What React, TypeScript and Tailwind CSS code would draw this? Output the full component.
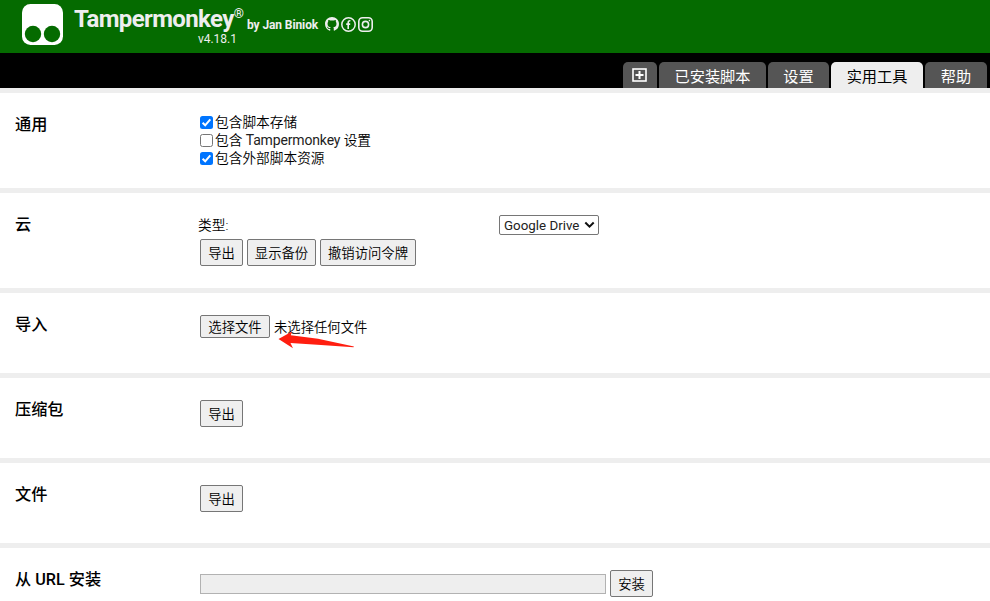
import React from "react";

const font = "font-['Roboto','Noto_Sans_CJK_SC',sans-serif]";

function Button({ children, className = "" }: { children: React.ReactNode; className?: string }) {
  return (
    <button
      className={`flex h-[27px] shrink-0 items-center justify-center whitespace-nowrap rounded-[2px] border border-[#767676] bg-[#efefef] pt-[2px] text-[13.33px] font-[350] leading-none text-black ${className}`}
    >
      {children}
    </button>
  );
}

function Section({ title, height, children }: { title: string; height: string; children: React.ReactNode }) {
  return (
    <section className={`flex shrink-0 border-b-[5px] border-[#eeeeee] bg-white pl-[15px] ${height}`}>
      <h2 className="w-[185px] shrink-0 pt-[21px] text-[16.2px] font-medium leading-[22px]">{title}</h2>
      <div className="min-w-0 flex-1">{children}</div>
    </section>
  );
}

function Check({ label, checked }: { label: React.ReactNode; checked: boolean }) {
  return (
    <label className="flex h-[18px] items-center">
      <span
        className={`mr-[2px] mt-px flex size-[13px] shrink-0 items-center justify-center rounded-[2.5px] ${
          checked ? "bg-[#0075ff]" : "border border-[#767676] bg-white"
        }`}
      >
        {checked && (
          <svg viewBox="0 0 13 13" className="size-[13px]" fill="none" stroke="#fff" strokeWidth="2">
            <path d="M2.6 6.8 5.2 9.3 10.3 3.3" />
          </svg>
        )}
      </span>
      <span className="whitespace-nowrap text-[13.7px] font-[350] leading-[18px]">{label}</span>
    </label>
  );
}

function Tab({ children, className = "", active = false }: { children: React.ReactNode; className?: string; active?: boolean }) {
  return (
    <div
      className={`flex h-[26px] shrink-0 items-center justify-center rounded-t-[5px] pt-[5px] text-[15.2px] leading-none ${
        active ? "bg-[#eeeeee] text-black" : "bg-[#555555] text-white"
      } ${className}`}
    >
      {children}
    </div>
  );
}

export default function App() {
  return (
    <div className={`flex h-[601px] w-[990px] flex-col overflow-hidden bg-white text-black ${font}`}>
      <header className="flex h-[53px] shrink-0 bg-[#056b00] pl-[22px] text-[#eeeeee]">
        <svg viewBox="0 0 41 41" className="mt-[4px] size-[41px] shrink-0">
          <rect width="41" height="41" rx="8.5" fill="#fff" />
          <circle cx="11" cy="30" r="8.2" fill="#056b00" />
          <circle cx="30" cy="30" r="8.2" fill="#056b00" />
        </svg>
        <div className="ml-[11px] w-[170px] shrink-0">
          <div className="flex h-[32px] pt-[5px] leading-[28px]">
            <span className="text-[24px] font-bold tracking-[-0.63px]">Tampermonkey</span>
            <span className="text-[13px] font-bold leading-[17px]">®</span>
          </div>
          <div className="pr-[7px] text-right text-[12px] leading-[14px]">v4.18.1</div>
        </div>
        <div className="ml-[3px] w-[73px] whitespace-nowrap pt-[17px] text-[12px] font-bold leading-[16px] tracking-[-0.1px]">by Jan Biniok</div>
        <div className="ml-[5px] flex gap-[2px] pt-[17px]">
          <svg viewBox="0 0 16 16" className="size-[14px]" fill="#eeeeee">
            <path d="M8 0C3.58 0 0 3.58 0 8c0 3.54 2.29 6.53 5.47 7.59.4.07.55-.17.55-.38 0-.19-.01-.82-.01-1.49-2.01.37-2.53-.49-2.69-.94-.09-.23-.48-.94-.82-1.13-.28-.15-.68-.52-.01-.53.63-.01 1.08.58 1.23.82.72 1.21 1.87.87 2.33.66.07-.52.28-.87.51-1.07-1.78-.2-3.64-.89-3.64-3.95 0-.87.31-1.59.82-2.15-.08-.2-.36-1.02.08-2.12 0 0 .67-.21 2.2.82.64-.18 1.32-.27 2-.27s1.36.09 2 .27c1.53-1.04 2.2-.82 2.2-.82.44 1.1.16 1.92.08 2.12.51.56.82 1.27.82 2.15 0 3.07-1.87 3.75-3.65 3.95.29.25.54.73.54 1.48 0 1.07-.01 1.93-.01 2.2 0 .21.15.46.55.38A8.01 8.01 0 0 0 16 8c0-4.42-3.58-8-8-8z" />
          </svg>
          <svg viewBox="0 0 15 15" className="size-[15px]" fill="none" stroke="#eeeeee" strokeWidth="1.5">
            <circle cx="7.5" cy="7.5" r="6.7" />
            <path d="M7.2 12V5.4c0-1.3.7-1.8 2.2-1.6M5.2 7.1h4" strokeWidth="1.6" />
          </svg>
          <svg viewBox="0 0 15 15" className="size-[15px]" fill="none" stroke="#eeeeee" strokeWidth="1.6">
            <rect x=".8" y=".8" width="13.4" height="13.4" rx="3.8" />
            <circle cx="7.5" cy="7.5" r="3.1" />
            <circle cx="11.4" cy="3.6" r=".8" fill="#eeeeee" stroke="none" />
          </svg>
        </div>
      </header>
      <nav className="flex h-[35px] shrink-0 items-end justify-end gap-[2px] bg-black pr-[3px]">
        <Tab className="w-[34px]">
          <svg viewBox="0 0 15 14" className="mb-[5px] mr-px h-[14px] w-[15px]" fill="none" stroke="#fff">
            <rect x="1" y="1" width="13" height="12" strokeWidth="1.6" />
            <path d="M7.5 3v8M3.5 7h8" strokeWidth="2" />
          </svg>
        </Tab>
        <Tab className="w-[107px]">已安装脚本</Tab>
        <Tab className="w-[61px]">设置</Tab>
        <Tab className="w-[92px]" active>实用工具</Tab>
        <Tab className="w-[62px]">帮助</Tab>
      </nav>
      <div className="h-[5px] shrink-0 bg-[#eeeeee]" />
      <Section title="通用" height="h-[100px]">
        <div className="pt-[20px]">
          <Check label="包含脚本存储" checked />
          <Check label={<>包含 <span className="text-[14px] font-normal tracking-[-0.15px] text-[#222]">Tampermonkey</span> 设置</>} checked={false} />
          <Check label="包含外部脚本资源" checked />
        </div>
      </Section>
      <Section title="云" height="h-[100px]">
        <div className="flex h-[46px] pt-[22px]">
          <span className="-ml-[2px] w-[301px] text-[13.7px] font-[350] leading-[20px]">类型:</span>
          <div className="flex h-[20px] w-[100px] items-center justify-between rounded-[2px] border border-[#767676] bg-white pl-[4px] pr-[3px] text-[13.33px] leading-none">
            <span className="whitespace-nowrap pt-px text-[#222]">Google Drive</span>
            <svg viewBox="0 0 11 8" className="h-[8px] w-[11px]" fill="none" stroke="#111" strokeWidth="2">
              <path d="M1.3 1.5 5.5 5.7 9.7 1.5" />
            </svg>
          </div>
        </div>
        <div className="flex gap-[4px]">
          <Button className="w-[43px]">导出</Button>
          <Button className="w-[69px]">显示备份</Button>
          <Button className="w-[96px]">撤销访问令牌</Button>
        </div>
      </Section>
      <Section title="导入" height="h-[85px]">
        <div className="relative flex items-center pt-[22px]">
          <Button className="h-[23px]! w-[70px]">选择文件</Button>
          <span className="ml-[4px] pt-[2px] text-[13.33px] font-[350] leading-[20px]">未选择任何文件</span>
          <svg viewBox="0 0 80 20" className="absolute left-[76px] top-[36px] h-[20px] w-[80px]" fill="#ff1e10">
            <path d="M2.5 10 16 2.5 14.8 6.2 42 9.8 78 17.5 77.5 18.3 45 16 14.5 14 17 19.3Z" />
          </svg>
        </div>
      </Section>
      <Section title="压缩包" height="h-[85px]">
        <div className="pt-[22px]">
          <Button className="w-[43px]">导出</Button>
        </div>
      </Section>
      <Section title="文件" height="h-[85px]">
        <div className="pt-[22px]">
          <Button className="w-[43px]">导出</Button>
        </div>
      </Section>
      <Section title="从 URL 安装" height="h-[100px]">
        <div className="flex items-center gap-[4px] pt-[22px]">
          <input className="h-[20px] w-[406px] border border-[#b2b2b2] bg-[#eeeeee]" />
          <Button className="w-[43px]">安装</Button>
        </div>
      </Section>
    </div>
  );
}
